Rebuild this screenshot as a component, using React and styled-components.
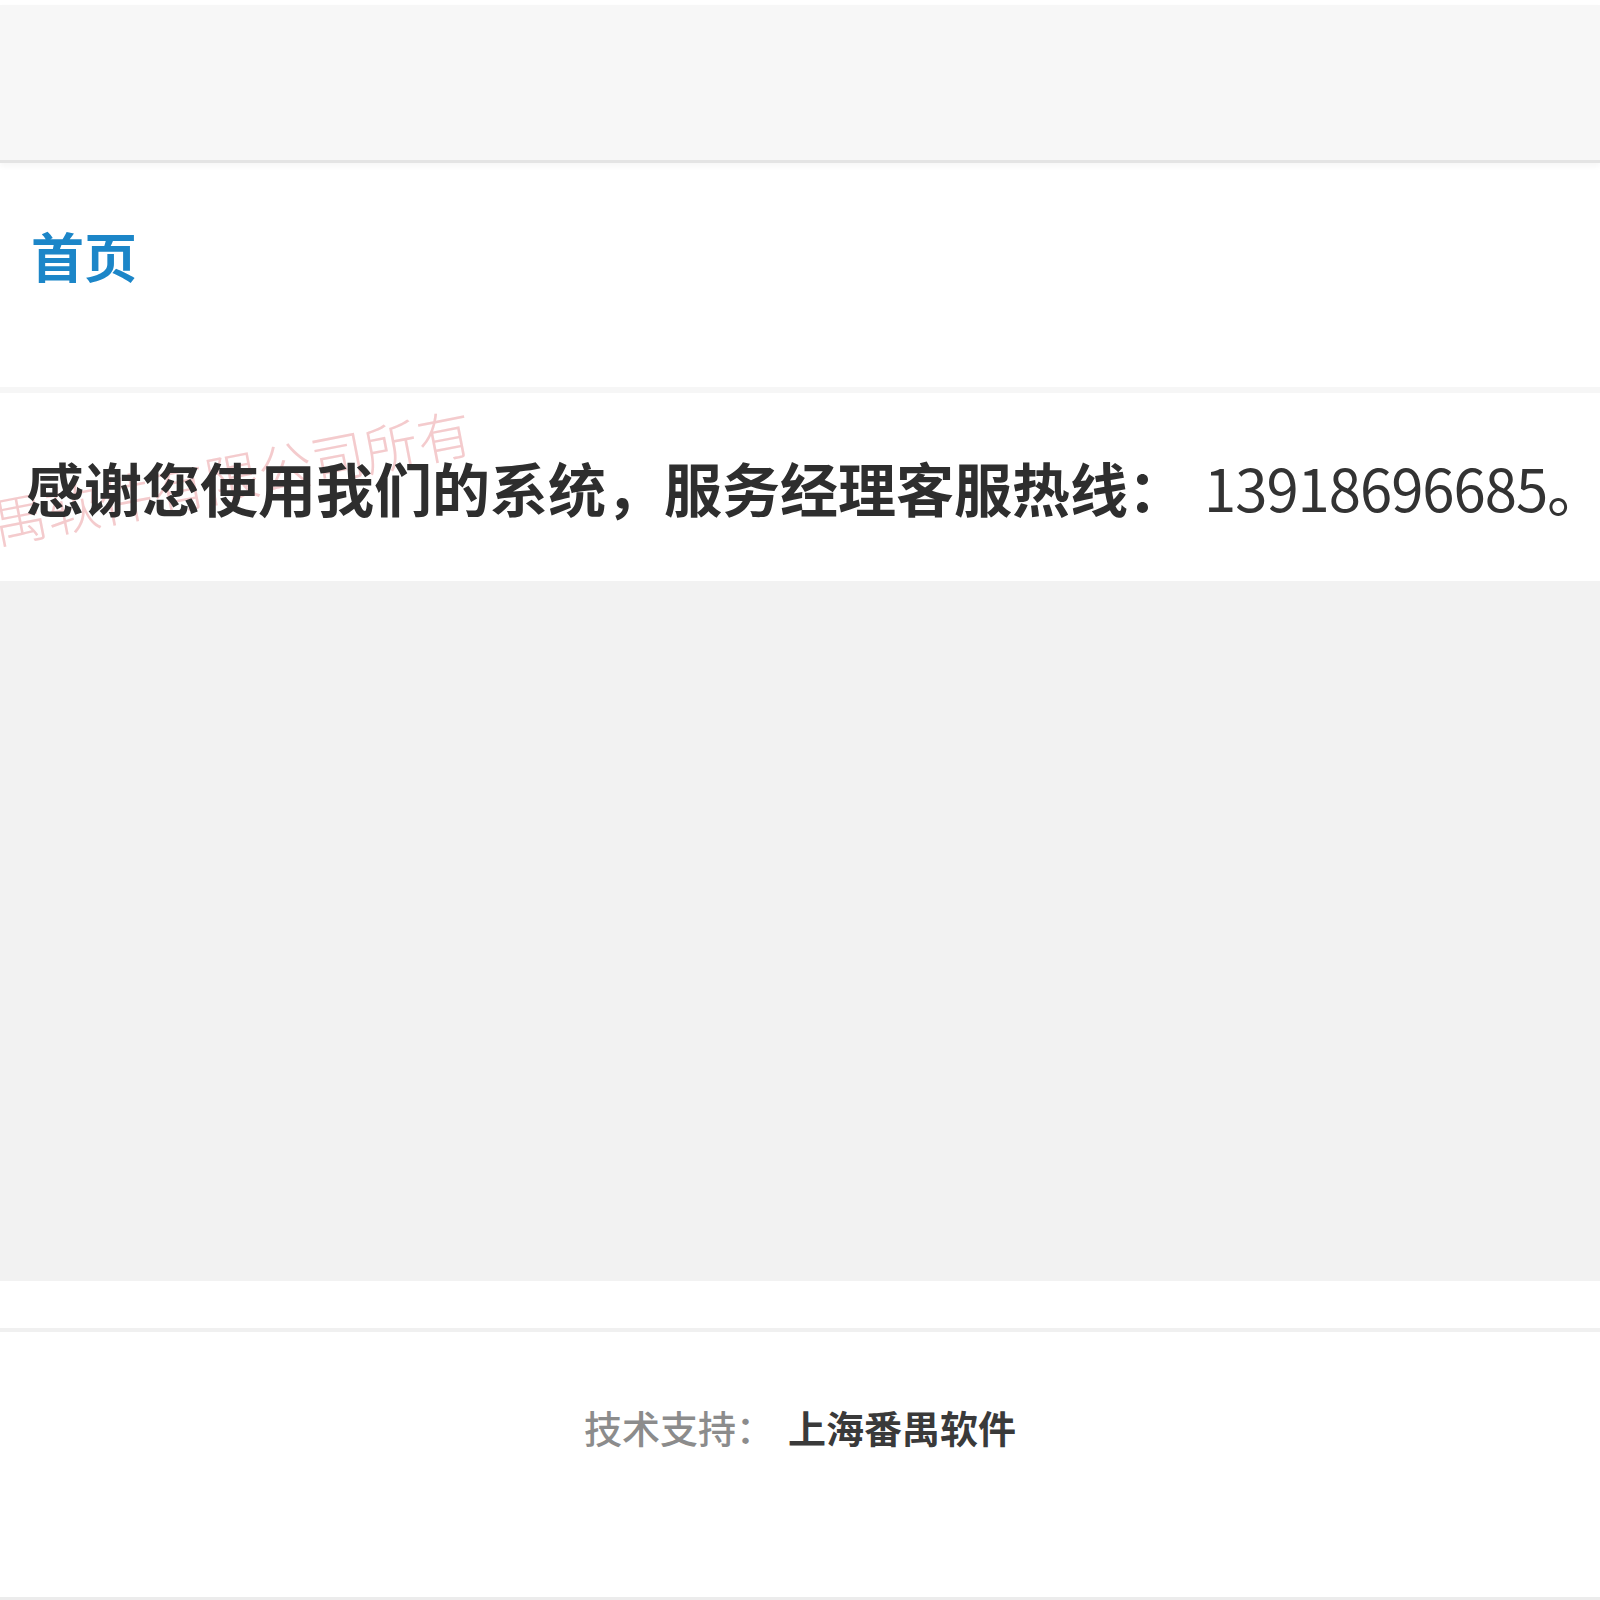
import React from 'react';
import styled, { createGlobalStyle } from 'styled-components';

const GlobalStyle = createGlobalStyle`
  html, body {
    margin: 0;
    padding: 0;
    background: #fff;
    font-family: "Noto Sans CJK SC", "Noto Sans", sans-serif;
  }
`;

const Page = styled.div`
  display: flex;
  flex-direction: column;
  width: 1600px;
  height: 1600px;
  padding-top: 5px;
  box-sizing: border-box;
  overflow: hidden;
`;

const TopBar = styled.header`
  height: 155px;
  flex-shrink: 0;
  background: #f7f7f7;
  border-bottom: 3px solid #e4e4e4;
  box-shadow: 0 3px 6px rgba(0, 0, 0, 0.04);
`;

const Nav = styled.nav`
  height: 230px;
  flex-shrink: 0;
  box-sizing: border-box;
  padding: 66px 0 0 31px;
  border-bottom: 6px solid #f6f6f6;
`;

const NavLink = styled.a`
  font-size: 53px;
  line-height: 53px;
  font-weight: 700;
  color: #1c86c8;
  text-decoration: none;
`;

const Notice = styled.section`
  position: relative;
  height: 188px;
  flex-shrink: 0;
  display: flex;
  align-items: center;
  padding-left: 26px;
  overflow: hidden;
`;

const Watermark = styled.span`
  position: absolute;
  right: calc(100% - 470px);
  top: 8px;
  font-size: 54px;
  line-height: 56px;
  font-weight: 300;
  white-space: nowrap;
  color: #f4cbcd;
  transform: rotate(-11deg);
  transform-origin: right center;
  z-index: 0;
`;

const NoticeText = styled.p`
  position: relative;
  z-index: 1;
  margin: 0;
  font-size: 58px;
  line-height: 58px;
  font-weight: 700;
  color: #2e2e2e;
  white-space: nowrap;
`;

const Phone = styled.span`
  font-weight: 400;
  margin-left: 18px;
  letter-spacing: -1px;
  color: #333;
`;

const Body = styled.main`
  height: 700px;
  flex-shrink: 0;
  background: #f2f2f2;
`;

const Gap = styled.div`
  height: 47px;
  flex-shrink: 0;
`;

const Footer = styled.footer`
  flex: 1;
  display: flex;
  justify-content: center;
  align-items: flex-start;
  padding-top: 76px;
  border-top: 4px solid #f0f0f0;
  border-bottom: 3px solid #ececec;
`;

const FooterText = styled.span`
  font-size: 38px;
  line-height: 38px;
  font-weight: ${p => (p.$strong ? 700 : 500)};
  color: ${p => (p.$strong ? '#3a3a3a' : '#8c8c8c')};
  margin-left: ${p => (p.$strong ? '14px' : '0')};
`;

export default function App() {
  return (
    <>
      <GlobalStyle />
      <Page>
        <TopBar />
        <Nav>
          <NavLink href="#">首页</NavLink>
        </Nav>
        <Notice>
          <Watermark>上海番禺软件有限公司所有</Watermark>
          <NoticeText>
            感谢您使用我们的系统，服务经理客服热线：
            <Phone>13918696685。</Phone>
          </NoticeText>
        </Notice>
        <Body />
        <Gap />
        <Footer>
          <FooterText>技术支持：</FooterText>
          <FooterText $strong>上海番禺软件</FooterText>
        </Footer>
      </Page>
    </>
  );
}
